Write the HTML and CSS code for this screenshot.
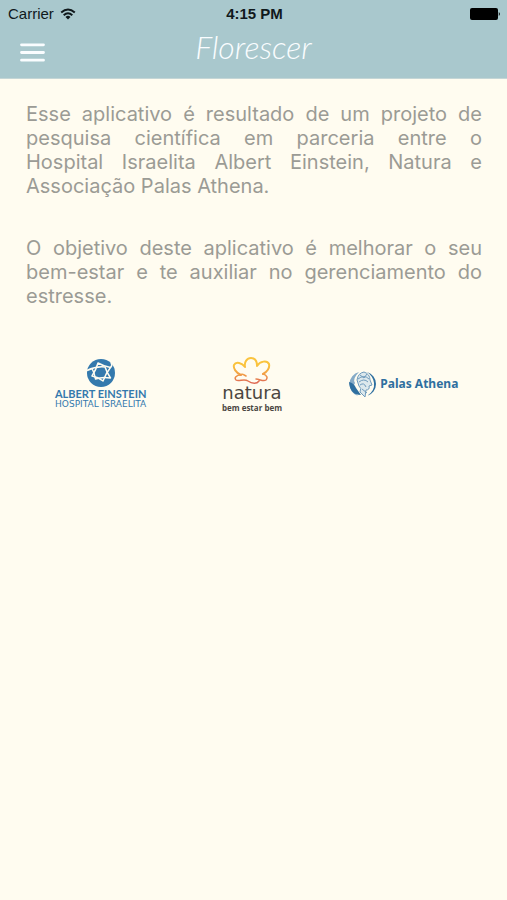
FILE: index.html
```html
<!DOCTYPE html>
<html lang="pt-BR">
<head>
<meta charset="utf-8">
<meta name="viewport" content="width=device-width, initial-scale=1">
<title>Florescer</title>
<link rel="stylesheet" href="styles.css">
</head>
<body>
<header class="header">
  <div class="status">
    <div class="carrier">
      <span>Carrier</span>
      <svg width="16" height="12" viewBox="0 0 16 12" aria-hidden="true">
        <g fill="none" stroke="#10191c" stroke-width="2">
          <path d="M1.2 4.5Q8-1.6 14.8 4.5"/>
          <path d="M3.7 7.3Q8 3.3 12.3 7.3"/>
        </g>
        <path d="M5.5 9Q8 6.7 10.5 9L8 11.5Z" fill="#10191c"/>
      </svg>
    </div>
    <span class="clock">4:15 PM</span>
    <svg class="battery" width="31" height="12" viewBox="0 0 31 12" aria-hidden="true">
      <rect width="28" height="12" rx="2"/>
      <path d="M28.8 4Q31 6 28.8 8Z"/>
    </svg>
  </div>
  <div class="navbar">
    <button class="menu" type="button" aria-label="Menu">
      <svg width="25" height="19" viewBox="0 0 25 19" aria-hidden="true">
        <path d="M1.5 1.8H23.5M1.5 9.5H23.5M1.5 17.2H23.5" stroke="#fafdff" stroke-width="2.8" stroke-linecap="round"/>
      </svg>
    </button>
    <h1 class="title">Florescer</h1>
  </div>
</header>
<main class="content">
  <p>Esse aplicativo é resultado de um projeto de pesquisa científica em parceria entre o Hospital&nbsp;Israelita Albert Einstein, Natura e Associação Palas Athena.</p>
  <p>O objetivo deste aplicativo é melhorar o seu bem-estar e te auxiliar no gerenciamento do estresse.</p>
</main>
<footer class="partners">
  <div class="partner einstein">
    <svg width="30" height="28" viewBox="0 0 30 28" aria-hidden="true">
      <circle cx="15" cy="14" r="14" fill="#3479ad"/>
      <g fill="none" stroke="#fffcf0" stroke-width="1.5" stroke-linejoin="round">
        <path d="M12 4Q17 7 24.500 8.500Q20 14 17 22Q12 18 6 17Q10 11 12 4Z"/>
        <path d="M1 11.500Q10 7 19 8Q21 14 24.500 19Q16 17.500 9.500 20Q8.500 14 6 9.500"/>
        <path d="M24.500 8.500Q27 6 25 3.500"/>
      </g>
    </svg>
    <span class="einstein-name">ALBERT EINSTEIN</span>
    <span class="einstein-sub">HOSPITAL ISRAELITA</span>
  </div>
  <div class="partner natura">
    <svg width="40" height="28" viewBox="0 0 40 28" aria-hidden="true">
      <defs>
        <linearGradient id="petal" x1="0" y1="0" x2="0" y2="28" gradientUnits="userSpaceOnUse">
          <stop offset="0.3" stop-color="#fac33d"/>
          <stop offset="0.65" stop-color="#f09a48"/>
          <stop offset="0.9" stop-color="#df6b55"/>
        </linearGradient>
      </defs>
      <g fill="none" stroke="url(#petal)" stroke-linecap="round" stroke-linejoin="round">
        <path stroke-width="2" d="M9 18C4 16 1 11 2 8C4 4 10 6 13 10C12 5 15 1 19 1C24 1 25 5 25 9C28 4 35 3 37 7C38 11 35 15 31 17"/>
        <path stroke-width="1.5" d="M9 18C4 18 2 21 4 23C7 25 12 21 16 24C20 27 25 27 27 24M31 17C35 18 36 21 34 23C31 25 28 22 24 22M14 19Q9 16 9 18"/>
      </g>
    </svg>
    <span class="natura-name">natura</span>
    <span class="natura-sub">bem estar bem</span>
  </div>
  <div class="partner palas">
    <svg width="29" height="28" viewBox="0 0 29 28" aria-hidden="true">
      <path d="M11 2A12.500 12.500 0 0 0 10 26C5 21 5 16 7 13Q4 9 11 2Z" fill="#86abc7"/>
      <path d="M1 12Q6 13 8 18L13 25Q2 25 1 12Z" fill="#2f6f9f"/>
      <path d="M19 2A12.500 12.500 0 0 1 19 26Q27 21 26 13Q25 6 19 2Z" fill="#2f6f9f"/>
      <g fill="none" stroke="#6f9bbc" stroke-width="1">
        <path d="M9 10Q10 3 16 2Q22 4 22 10L24 15L21 16Q22 20 18 20L17 27L12 22Q14 18 11 16Z" fill="#dce8ec"/>
        <path d="M10 9Q16 4 21 9M11 12Q16 8 20 12M12 15Q16 12 18 17M14 19L19 23M12 5L16 8L19 4"/>
      </g>
    </svg>
    <span class="palas-name">Palas Athena</span>
  </div>
</footer>
</body>
</html>
```
FILE: styles.css
```css
* {
  box-sizing: border-box;
}

body {
  margin: 0;
  min-height: 100vh;
  background: #fffcf0;
  color: #9b9b95;
  font-family: Inter, "Liberation Sans", sans-serif;
}

.header {
  background: #a9c8cd;
  border-bottom: 1px solid #c5d6d6;
}

.status {
  display: grid;
  grid-template-columns: 1fr auto 1fr;
  align-items: center;
  height: 28px;
  padding: 0 6px 0 8px;
  color: #10191c;
  font: 15px/28px "Liberation Sans", sans-serif;
}

.carrier {
  display: flex;
  align-items: center;
  gap: 6px;
}

.clock {
  font-weight: bold;
}

.battery {
  justify-self: end;
  fill: #000;
}

.navbar {
  display: grid;
  grid-template-columns: 1fr auto 1fr;
  height: 50px;
  padding: 0 20px;
}

.menu {
  display: flex;
  align-items: center;
  align-self: start;
  justify-self: start;
  height: 48px;
  padding: 0;
  border: 0;
  background: none;
}

.title {
  margin: 0;
  color: #fafdff;
  font: italic 300 32px/38px Lato, sans-serif;
}

.content {
  padding: 23px 25px 0 26px;
}

.content p {
  margin: 0 0 38px;
  font-size: 20px;
  font-weight: 400;
  line-height: 24px;
  text-align: justify;
}

.partners {
  display: grid;
  grid-template-columns: repeat(3, 1fr);
  align-items: start;
  padding: 11px 28px 0 25px;
}

.partner {
  display: flex;
  flex-direction: column;
  align-items: center;
  white-space: nowrap;
}

.einstein {
  padding-top: 2px;
  color: #3479ad;
}

.einstein-name {
  font: bold 11px/13px Lato, sans-serif;
}

.einstein-sub {
  font: 9px/9px "DejaVu Sans", sans-serif;
}

.natura {
  color: #4b4641;
}

.natura-name {
  font: 500 18px/16px "DejaVu Sans", sans-serif;
}

.natura-sub {
  padding-top: 2px;
  font: bold 8px/10px "Open Sans", sans-serif;
}

.palas {
  flex-direction: row;
  justify-content: center;
  gap: 3px;
  padding-top: 13px;
  color: #2f6f9f;
}

.palas-name {
  font: bold 12px/16px "Noto Sans", sans-serif;
}
```
